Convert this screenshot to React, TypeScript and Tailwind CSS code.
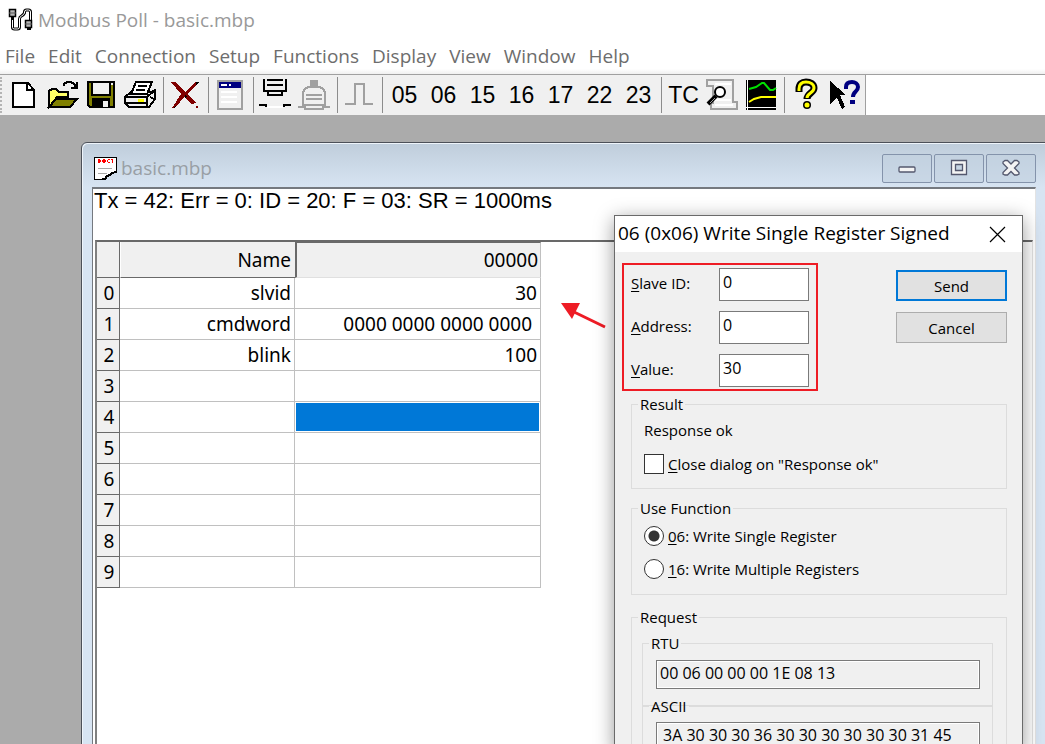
import type { ReactNode } from "react";

const menus = ["File", "Edit", "Connection", "Setup", "Functions", "Display", "View", "Window", "Help"];

const rows = [
  { name: "slvid", value: "30" },
  { name: "cmdword", value: "0000 0000 0000 0000 " },
  { name: "blink", value: "100" },
  { name: "", value: "" },
  { name: "", value: "", selected: true },
  { name: "", value: "" },
  { name: "", value: "" },
  { name: "", value: "" },
  { name: "", value: "" },
  { name: "", value: "" },
];

function ToolButton({ label, children }: { label: string; children: ReactNode }) {
  return (
    <button aria-label={label} className="flex h-9 w-[39px] shrink-0 items-center justify-center text-[23px] text-black">
      {children}
    </button>
  );
}

function Glyph({ children }: { children: ReactNode }) {
  return (
    <svg viewBox="0 0 39 36" className="h-9 w-[39px]" fill="none" shapeRendering="crispEdges">
      {children}
    </svg>
  );
}

function Separator() {
  return (
    <div className="flex h-9 w-1.5 shrink-0 justify-center">
      <div className="h-full w-px bg-[#8c8c8c]" />
    </div>
  );
}

function Toolbar() {
  return (
    <div className="flex h-[42px] border-y border-t-[#a0a0a0] border-b-[#696969] bg-white">
      <div className="flex bg-[#f0f0f0] py-0.5">
        <div className="mr-0.5 w-0.5 border-l-2 border-dotted border-[#b4b4b4]" />
        <ToolButton label="New">
          <Glyph>
            <path d="M9 6h15l6 7v17H9z" fill="#fff" stroke="#000" strokeWidth="2" />
            <path d="M23 6v7h7" stroke="#000" strokeWidth="2" />
          </Glyph>
        </ToolButton>
        <ToolButton label="Open">
          <Glyph>
            <path d="M6 30V14l3-2h4l3 3h9v5H14z" fill="#ffff66" stroke="#000" strokeWidth="2" />
            <path d="M6 30l7-8h21l-7 8z" fill="#808000" stroke="#000" strokeWidth="2" />
            <path d="M21 9V7l3-2h4l3 2 2 3M28 11h6V5" stroke="#000" strokeWidth="2" />
          </Glyph>
        </ToolButton>
        <ToolButton label="Save">
          <Glyph>
            <path d="M6 5h26v25H8l-2-2z" fill="#808000" stroke="#000" strokeWidth="2" />
            <path d="M10 5h18v13H10z" fill="#f0f0f0" stroke="#000" strokeWidth="2" />
            <path d="M10 21h18v10H10z" fill="#000" />
            <path d="M21 24h5v6h-5z" fill="#f0f0f0" />
            <path d="M29 6h2v2h-2z" fill="#f0f0f0" />
          </Glyph>
        </ToolButton>
        <ToolButton label="Print">
          <Glyph>
            <path d="M4 20l6-5h20l4-2v9l-6 8H8l-4-4z" fill="#f0f0f0" stroke="#000" strokeWidth="2" />
            <path d="M10 17l5-12h16l-5 12z" fill="#fff" stroke="#000" strokeWidth="2" />
            <path d="M17 9h9M15 13h9M4 20h22l7-6M26 20v10M5 26h20M29 20l4 2" stroke="#000" strokeWidth="2" />
            <path d="M5 22h20v3H5z" fill="#f0f0f0" />
            <path d="M17 22h6v3h-6z" fill="#ff0" />
          </Glyph>
        </ToolButton>
        <Separator />
        <ToolButton label="Delete">
          <Glyph>
            <path d="M5 5h4l10 10L30 5h3L22 17l8 9-4 1-8-7-8 10-4 1 9-14z" fill="#800000" />
            <path d="M30 5h3l-3 3zM19 18l2 2-2 1zM9 29l1 1-2 1z" fill="#000" />
            <path d="M30 29h2v2h-2z" fill="#800000" />
          </Glyph>
        </ToolButton>
        <Separator />
        <ToolButton label="Display definition">
          <Glyph>
            <path d="M7 4h24v28H7z" fill="#f0f0f0" stroke="#a0a0a0" strokeWidth="2" />
            <path d="M8 5h22v6H8z" fill="#000080" />
            <path d="M10 7h6v2h-6zM18 7h2v2h-2z" fill="#fff" />
            <path d="M10 15h16M10 20h16M10 25h16" stroke="#fff" strokeWidth="2" />
          </Glyph>
        </ToolButton>
        <Separator />
        <ToolButton label="Connect">
          <Glyph>
            <path d="M8 2v12h22V2M11 3h16M11 8h16M12 14v4h14v-4M3 28h7v2M35 28h-7v2" stroke="#000" strokeWidth="2" />
            <path d="M11 30h16" stroke="#fff" strokeWidth="2" />
          </Glyph>
        </ToolButton>
        <ToolButton label="Disconnect">
          <Glyph>
            <path d="M15 3h8v7h-8z" fill="#a0a0a0" />
            <path d="M8 29V15l2-3 3-2h12l3 2 2 3v14M11 18h16M11 22h16M3 30h7v2h18v-2h7M8 28h22" stroke="#a0a0a0" strokeWidth="2" />
          </Glyph>
        </ToolButton>
        <Separator />
        <ToolButton label="Pulse">
          <Glyph>
            <path d="M5 27h10V7h9v20h9" stroke="#a0a0a0" strokeWidth="2" />
          </Glyph>
        </ToolButton>
        <Separator />
        {["05", "06", "15", "16", "17", "22", "23"].map((code) => (
          <ToolButton key={code} label={code}>
            {code}
          </ToolButton>
        ))}
        <Separator />
        <ToolButton label="TC">TC</ToolButton>
        <ToolButton label="Communication traffic">
          <Glyph>
            <path d="M4 3h26v22h4v7H8v-6h2V9H4z" fill="#f0f0f0" stroke="#a0a0a0" strokeWidth="2" />
            <path d="M12 28h18M12 23h16M12 7h16" stroke="#fff" strokeWidth="2" />
            <circle cx="17" cy="15" r="5" fill="#fff" stroke="#000" strokeWidth="2" shapeRendering="auto" />
            <path d="M13 19l-8 8" stroke="#000" strokeWidth="4" shapeRendering="auto" />
            <path d="M12 21l-5 5" stroke="#a0a0a0" strokeWidth="1" />
          </Glyph>
        </ToolButton>
        <ToolButton label="Chart">
          <Glyph>
            <path d="M4 3h30v30H4z" fill="#000" />
            <path d="M5.500 3v30M4 30.500h30" stroke="#fff" strokeWidth="1" />
            <path d="M7 12l7-2 6-4h2l6 7h3l3-2" stroke="#00e000" strokeWidth="2" shapeRendering="auto" />
            <path d="M7 25l5-3 7-2h15" stroke="#ff0" strokeWidth="2" shapeRendering="auto" />
          </Glyph>
        </ToolButton>
        <Separator />
        <ToolButton label="About">
          <Glyph>
            <g shapeRendering="auto">
              <path d="M12 15v-3c0-5 3-7 7-7s8 2 8 6c0 5-7 5-7 11" stroke="#000" strokeWidth="7" />
              <circle cx="20" cy="28" r="4" fill="#000" />
              <path d="M12 14v-2c0-5 3-7 7-7s8 2 8 6c0 5-7 5-7 10" stroke="#ff0" strokeWidth="3" />
              <circle cx="20" cy="28" r="2.500" fill="#ff0" />
            </g>
          </Glyph>
        </ToolButton>
        <ToolButton label="Context help">
          <Glyph>
            <path d="M4 4l16 14h-6l5 12-3 2-5-11-7 6z" fill="#000" />
            <path d="M20 12v-2c0-4 3-5 6-5s6 2 6 5c0 5-5 4-5 10" stroke="#000080" strokeWidth="4" shapeRendering="auto" />
            <path d="M24 23h5v4h-5z" fill="#000080" />
          </Glyph>
        </ToolButton>
        <div className="-my-0.5 w-px bg-[#a0a0a0]" />
      </div>
    </div>
  );
}

function AppIcon() {
  return (
    <svg viewBox="0 0 26 24" className="h-6 w-[26px]" fill="none">
      <path d="M4.500 9v10.500q0 1.500 2 1.500h3q2 0 2-2v-8q0-2 2-3t3-3V4q0-2 2-2h2q2 0 2 2v9" stroke="#000" strokeWidth="3" />
      <path d="M4.500 9v10.500q0 1.500 2 1.500h3q2 0 2-2v-8q0-2 2-3t3-3V4q0-2 2-2h2q2 0 2 2v9" stroke="#fff" strokeWidth="1" />
      <path d="M1.500 1.500h6v7h-6zM17.500 12.500h6v7h-6z" fill="#b4b4b4" stroke="#000" strokeWidth="1.500" />
      <path d="M1 5h7M17 16h7" stroke="#555" strokeWidth="1" />
      <path d="M3 9h3v3H3zM19 20h4v2h-4z" fill="#000" />
    </svg>
  );
}

function CaptionButton({ label, children }: { label: string; children: ReactNode }) {
  return (
    <button
      aria-label={label}
      className="flex h-[29px] w-[50px] items-center justify-center rounded-[2px] border border-[#8493ab] bg-[#c2d0df]/60"
    >
      <svg viewBox="0 0 20 18" className="h-[18px] w-5" fill="#f4f4f4" stroke="#54586e" strokeWidth="1.300">
        {children}
      </svg>
    </button>
  );
}

function RegisterTable() {
  return (
    <table className="w-[444px] table-fixed border-separate border-spacing-0 text-right font-['Noto_Sans','Open_Sans',sans-serif] text-[19px] leading-6 text-black">
      <colgroup>
        <col className="w-[23px]" />
        <col className="w-[175px]" />
        <col className="w-[246px]" />
      </colgroup>
      <thead>
        <tr className="h-9 bg-[#f0f0f0]">
          <td className="border-r border-b border-[#696969]" />
          <th className="border-b border-l border-b-[#696969] border-l-white px-1 font-normal">Name</th>
          <th className="border-t border-r border-b border-l-2 border-t-[#696969] border-r-[#c0c0c0] border-b-[#e0e0e0] border-l-[#696969] px-0.5 font-normal">
            00000
          </th>
        </tr>
      </thead>
      <tbody>
        {rows.map((row, i) => (
          <tr key={i} className="h-[31px]">
            <th className="border-r border-b border-[#696969] bg-[#f0f0f0] pl-0.5 text-center font-normal">{i}</th>
            <td className="border-r border-b border-[#c0c0c0] bg-white px-[3px]">{row.name}</td>
            <td className="border-r border-b border-[#c0c0c0] bg-white p-0">
              {row.selected ? (
                <div className="m-px h-7 bg-[#0078d7]" />
              ) : (
                <span className="pr-[3px] whitespace-pre">{row.value}</span>
              )}
            </td>
          </tr>
        ))}
      </tbody>
    </table>
  );
}

function DocumentWindow() {
  return (
    <section className="absolute top-[27px] -right-px -bottom-2 left-[81px] flex flex-col rounded-tl-md border border-[#4c5058] bg-[#d7e4f2] bg-linear-to-b from-[#bfcddb] from-0% to-[#d7e4f2] to-[44px] px-[9px] pl-2.5 shadow-[inset_1px_1px_0_#eef4fa]">
      <header className="flex h-11 shrink-0 items-center justify-between pt-1.5">
        <div className="flex items-center gap-1">
          <svg viewBox="0 0 24 25" className="ml-px h-[25px] w-6" shapeRendering="crispEdges">
            <path d="M1 1h22v15h-3l-2 3h-3l-2 3h-3v1H1z" fill="#fff" stroke="#000" strokeWidth="1" />
            <path d="M23 16l-4 1-2 2-3 1-2 3H9" fill="none" stroke="#000" strokeWidth="2" />
            <path
              d="M5 3h2v1h1v2H7v1H5zM9 4h1V3h2v1h1v2h-1v1h-2V6H9zM14 4h1V3h2v1h-2v2h2v1h-2V6h-1zM18 3h2v4h-1V4h-1z"
              fill="#f00"
            />
            <path d="M5 12.500h14M5 17.500h9" stroke="#a8a8a8" strokeWidth="1" />
          </svg>
          <h2 className="text-[19px] leading-6 text-[#999fa5]">basic.mbp</h2>
        </div>
        <div className="flex gap-0.5">
          <CaptionButton label="Minimize">
            <rect x="2" y="8" width="16" height="5" rx="1" />
          </CaptionButton>
          <CaptionButton label="Maximize">
            <path d="M2.500 1.500h15v14h-15zM6.500 5.500h7v6h-7z" fillRule="evenodd" />
          </CaptionButton>
          <CaptionButton label="Close">
            <path d="M2 3l2-1.500h2.500L10 5l3.500-3.500H16l2 1.500v1.500L13.500 9l4.500 4.500V15l-2 1h-2.500L10 12.500 6.500 16H4l-2-1v-1.500L6.500 9 2 4.500z" />
          </CaptionButton>
        </div>
      </header>
      <div className="flex grow flex-col border-t-2 border-r border-l border-t-[#75797f] border-r-[#e3e3e3] border-l-[#75797f] bg-white">
        <p className="h-[51px] shrink-0 pl-px font-['Liberation_Sans',Arial,sans-serif] text-[22px] leading-6 text-black">
          Tx = 42: Err = 0: ID = 20: F = 03: SR = 1000ms
        </p>
        <div className="mr-0.5 ml-0.5 grow border-t-2 border-r border-l-2 border-t-[#696969] border-r-[#e3e3e3] border-l-[#808080]">
          <RegisterTable />
        </div>
      </div>
    </section>
  );
}

function Field({ id, hotkey, rest, value }: { id: string; hotkey: string; rest: string; value: string }) {
  return (
    <div className="flex items-center">
      <label htmlFor={id} className="w-[88px] pb-1">
        <u className="underline-offset-2">{hotkey}</u>
        {rest}
      </label>
      <input
        id={id}
        defaultValue={value}
        className="h-[33px] w-[90px] border border-[#7a7a7a] bg-white px-[3px] pb-1.5 text-base outline-none"
      />
    </div>
  );
}

function Group({ title, className, children }: { title: string; className: string; children: ReactNode }) {
  return (
    <fieldset className={`min-w-0 border border-[#dcdcdc] ${className}`}>
      <legend className="ml-1.5 px-0.5 leading-5">{title}</legend>
      {children}
    </fieldset>
  );
}

function WriteDialog() {
  return (
    <section
      role="dialog"
      aria-label="Write Single Register"
      className="absolute top-[100px] -bottom-2 left-[614px] flex w-[409px] flex-col border border-[#6a6a6a] bg-[#f0f0f0] text-[15px] leading-5 text-black shadow-[0_4px_18px_rgba(0,0,0,0.4)]"
    >
      <header className="flex h-9 shrink-0 items-center justify-between bg-white pr-4 pl-[3px]">
        <h2 className="pb-0.5 text-[19px] leading-6">06 (0x06) Write Single Register Signed</h2>
        <button aria-label="Close">
          <svg viewBox="0 0 17 17" className="size-[17px]" fill="none" stroke="#000" strokeWidth="1.200">
            <path d="M1 1l15 15M16 1L1 16" />
          </svg>
        </button>
      </header>
      <div className="pt-4 pr-[15px] pl-4">
        <div className="flex items-start justify-between">
          <div className="flex flex-col gap-2.5">
            <Field id="slave" hotkey="S" rest="lave ID:" value="0" />
            <Field id="address" hotkey="A" rest="ddress:" value="0" />
            <Field id="value" hotkey="V" rest="alue:" value="30" />
          </div>
          <div className="mt-0.5 flex w-[111px] flex-col gap-[11px]">
            <button className="h-[31px] border-2 border-[#0078d7] bg-[#e1e1e1]">Send</button>
            <button className="h-[31px] border border-[#adadad] bg-[#e1e1e1]">Cancel</button>
          </div>
        </div>
        <Group title="Result" className="mt-[7px] h-[95px]">
          <div className="flex flex-col gap-3.5 px-3 pt-1.5">
            <p>Response ok</p>
            <label className="flex items-center gap-1">
              <input type="checkbox" className="size-5 appearance-none border border-[#333] bg-white" />
              <span>
                <u className="underline-offset-2">C</u>lose dialog on "Response ok"
              </span>
            </label>
          </div>
        </Group>
        <Group title="Use Function" className="mt-[9px] h-[97px]">
          <div className="flex flex-col gap-[13px] px-3 pt-2">
            <label className="flex items-center gap-1">
              <input
                type="radio"
                name="fn"
                defaultChecked
                className="size-5 appearance-none rounded-full border border-[#333] bg-white checked:bg-[radial-gradient(circle,#333_5px,#fff_6px)]"
              />
              <span>
                <u className="underline-offset-2">0</u>6: Write Single Register
              </span>
            </label>
            <label className="flex items-center gap-1">
              <input
                type="radio"
                name="fn"
                className="size-5 appearance-none rounded-full border border-[#333] bg-white checked:bg-[radial-gradient(circle,#333_5px,#fff_6px)]"
              />
              <span>
                <u className="underline-offset-2">1</u>6: Write Multiple Registers
              </span>
            </label>
          </div>
        </Group>
        <Group title="Request" className="mt-3">
          <div className="pt-1.5 pr-[13px] pb-3 pl-2.5">
            <Group title="RTU" className="h-[73px]">
              <div className="px-3 pt-[7px] pl-[13px]">
                <input
                  readOnly
                  aria-label="RTU request"
                  defaultValue="00 06 00 00 00 1E 08 13"
                  className="h-[29px] w-full border border-[#7a7a7a] bg-[#f0f0f0] px-[3px] pb-[3px] text-base shadow-[inset_0_0_0_1px_#fff] outline-none"
                />
              </div>
            </Group>
            <Group title="ASCII" className="-mt-2.5 h-[73px]">
              <div className="px-3 pt-1.5 pl-[13px]">
                <input
                  readOnly
                  aria-label="ASCII request"
                  defaultValue="3A 30 30 30 36 30 30 30 30 30 30 31 45"
                  className="h-[29px] w-full border border-[#7a7a7a] bg-[#f0f0f0] px-1.5 pb-[3px] text-base shadow-[inset_0_0_0_1px_#fff] outline-none"
                />
              </div>
            </Group>
          </div>
        </Group>
      </div>
      <div className="pointer-events-none absolute top-[47px] left-[7px] h-32 w-[196px] border-2 border-[#ee1c25]" />
    </section>
  );
}

export default function App() {
  return (
    <main className="flex h-screen flex-col overflow-hidden bg-white font-['Open_Sans','Noto_Sans',sans-serif]">
      <header className="flex h-10 shrink-0 items-center gap-1 pl-2">
        <AppIcon />
        <h1 className="text-[19px] leading-6 text-[#999]">Modbus Poll - basic.mbp</h1>
      </header>
      <nav className="flex h-[34px] shrink-0 gap-[13px] bg-linear-to-b from-white from-85% to-[#f0f0f0] pt-1 pl-[5px] text-[19px] leading-6 text-[#6d6d6d]">
        {menus.map((m) => (
          <button key={m} className="h-6">
            {m}
          </button>
        ))}
      </nav>
      <div className="shrink-0 font-['Liberation_Sans',Arial,sans-serif]">
        <Toolbar />
      </div>
      <div className="relative -mt-px min-h-0 grow overflow-hidden bg-[#ababab]">
        <DocumentWindow />
        <svg viewBox="0 0 48 28" className="absolute top-[187px] left-[560px] h-7 w-12">
          <path d="M45 25L12 9" stroke="#ee1c25" strokeWidth="3" />
          <path d="M1 1h19l-8 16z" fill="#ee1c25" />
        </svg>
        <WriteDialog />
      </div>
    </main>
  );
}
